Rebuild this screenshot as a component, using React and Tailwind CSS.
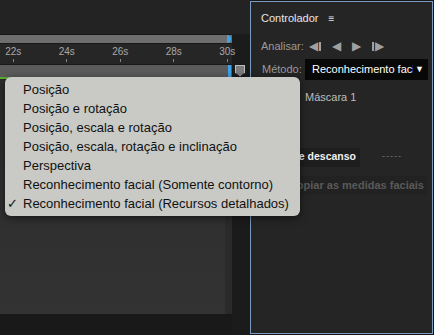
import React from "react";

const items = [
  "Posição",
  "Posição e rotação",
  "Posição, escala e rotação",
  "Posição, escala, rotação e inclinação",
  "Perspectiva",
  "Reconhecimento facial (Somente contorno)",
  "Reconhecimento facial (Recursos detalhados)",
];

const ticks = ["22s", "24s", "26s", "28s", "30s"];

const App = () => {
  return (
    <div
      className="relative w-[434px] h-[335px] overflow-hidden bg-[#161616] flex"
      style={{ fontFamily: '"Liberation Sans", Arial, sans-serif' }}
    >
      {/* Timeline */}
      <div className="w-[250px] h-full flex flex-col">
        <div className="h-[34px] bg-[#232323] shrink-0" />
        <div className="flex flex-1 min-h-0">
          <div className="w-[232px] flex flex-col">
            <div className="relative h-[10px] bg-[#6e6e6e] border-y border-[#181818]">
              <div className="absolute right-[1px] top-0 w-[4px] h-full bg-[#3ea3e8] rounded-r-sm" />
            </div>
            <div className="relative h-[20px] bg-[#262626] flex text-[10px] text-[#a8a8a8]">
              {ticks.map((t, i) => (
                <div key={i} className="w-[53.5px] shrink-0 flex flex-col items-center pl-[1px] first:ml-[-14px]">
                  <span className="leading-[14px] mt-[1px]">{t}</span>
                  <span className="w-px h-[3px] bg-[#888]" />
                </div>
              ))}
            </div>
            <div className="relative h-[13px] bg-[#5b5b5b] border-t border-[#181818]">
              <div className="absolute right-[1px] top-0 w-[3px] h-full bg-[#3ea3e8]" />
            </div>
            <div className="h-[2px] bg-[#1d1d1d] flex">
              <div className="w-[10px] bg-[#5bb030]" />
            </div>
            <div className="flex-1 flex">
              <div className="flex-1 bg-gradient-to-b from-[#2b2b2b] to-[#333333]" />
              <div className="w-[7px] bg-[#2a2a2a]" />
            </div>
            <div className="h-[21px] bg-[#191919]" />
          </div>
          <div className="flex-1 bg-[#1b1b1b] flex flex-col">
            <div className="h-[31px]" />
            <div className="ml-[3px] w-[10px] h-[11px] bg-[#7c7c7c] border border-[#bbb] [clip-path:polygon(0_0,100%_0,100%_70%,50%_100%,0_70%)]" />
          </div>
        </div>
      </div>

      {/* Controlador panel */}
      <div className="w-[183px] h-[333px] mt-[1px] border border-[#7a9cc0] bg-[#252525] flex flex-col text-[11px]">
        <div className="flex items-center gap-[10px] pl-[10px] pt-[8px] h-[24px] text-[#e6e6e6]">
          <span>Controlador</span>
          <span className="text-[10px]">≡</span>
        </div>
        <div className="flex items-center pl-[10px] mt-[12px] h-[16px] text-[#9a9a9a]">
          <span className="w-[48px]">Analisar:</span>
          <span className="flex items-center gap-[11px] text-[12px] text-[#a0a0a0]">
            <span className="flex items-center">◀<span className="w-[2px] h-[9px] bg-[#a0a0a0] ml-[1px]" /></span>
            <span>◀</span>
            <span>▶</span>
            <span className="flex items-center"><span className="w-[2px] h-[9px] bg-[#a0a0a0] mr-[1px]" />▶</span>
          </span>
        </div>
        <div className="flex items-center pl-[11px] mt-[5px] h-[21px] text-[#9a9a9a]">
          <span className="w-[43px] shrink-0">Método:</span>
          <div className="flex-1 min-w-0 mr-[4px] h-full bg-[#080808] flex items-center pl-[7px] pr-[4px] text-white text-[11px]">
            <span className="flex-1 min-w-0 overflow-hidden whitespace-nowrap">Reconhecimento facial</span>
            <span className="shrink-0 text-[9px] ml-[2px]">▼</span>
          </div>
        </div>
        <div className="pl-[54px] mt-[9px] text-[#bdbdbd]">Máscara 1</div>
        <div className="flex items-center mt-[42px] h-[19px] pl-[2px]">
          <div className="w-[107px] h-full bg-[#1e1e1e] flex items-center justify-end pr-[4px] text-[#f0f0f0] font-bold text-[10.5px] whitespace-nowrap">
            Posição de descanso
          </div>
          <span className="ml-[22px] text-[#777] text-[9px] tracking-[1px]">-----</span>
        </div>
        <div className="mt-[9px] h-[19px] ml-[2px] mr-[6px] bg-[#222] flex items-center justify-end pr-[2px] text-[#5a5a5a] font-bold whitespace-nowrap">
          Copiar as medidas faciais
        </div>
      </div>

      {/* Dropdown menu */}
      <div className="absolute left-[5px] top-[77px] w-[295px] h-[139px] rounded-[6px] bg-[#c9cac6] shadow-[0_2px_8px_rgba(0,0,0,0.5)] pt-[3px] text-[13px] text-[#111]">
        {items.map((label, i) => (
          <div key={i} className="flex items-center h-[19px] leading-[19px] whitespace-nowrap">
            <span className="w-[18px] pl-[2px] text-[13px]">{i === items.length - 1 ? "✓" : ""}</span>
            <span>{label}</span>
          </div>
        ))}
      </div>
    </div>
  );
};

export default App;
